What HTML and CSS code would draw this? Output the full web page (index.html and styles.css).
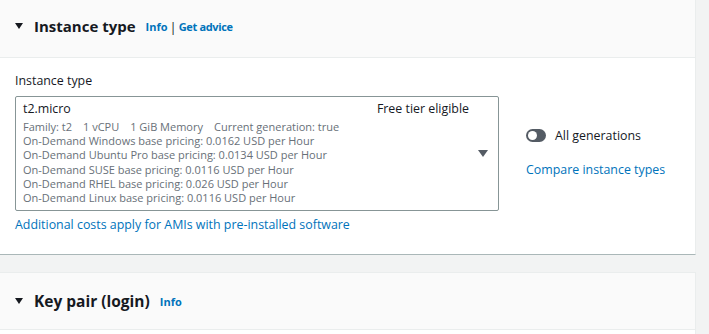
FILE: index.html
```html
<!DOCTYPE html>
<html>
<head>
<meta charset="utf-8">
<link rel="stylesheet" href="styles.css">
</head>
<body>
<div class="page">
  <section class="panel">
    <header class="panel-head first">
      <span class="caret"></span>
      <h2 class="title">Instance type</h2>
      <span class="head-links"><a class="info">Info</a><span class="sep">|</span><a class="info">Get advice</a></span>
    </header>
    <div class="panel-body">
      <div class="field">
        <div class="label">Instance type</div>
        <div class="row">
          <div class="select">
            <div class="opt-top"><span class="opt-name">t2.micro</span><span class="opt-tag">Free tier eligible</span></div>
            <div class="opt-tags"><span>Family: t2</span><span>1 vCPU</span><span>1 GiB Memory</span><span>Current generation: true</span></div>
            <div class="opt-line">On-Demand Windows base pricing: 0.0162 USD per Hour</div>
            <div class="opt-line">On-Demand Ubuntu Pro base pricing: 0.0134 USD per Hour</div>
            <div class="opt-line">On-Demand SUSE base pricing: 0.0116 USD per Hour</div>
            <div class="opt-line">On-Demand RHEL base pricing: 0.026 USD per Hour</div>
            <div class="opt-line">On-Demand Linux base pricing: 0.0116 USD per Hour</div>
            <span class="select-caret"></span>
          </div>
          <div class="side">
            <div class="toggle-row"><span class="toggle"><span class="knob"></span></span><span class="toggle-label">All generations</span></div>
            <a class="link">Compare instance types</a>
          </div>
        </div>
        <a class="link costs">Additional costs apply for AMIs with pre-installed software</a>
      </div>
    </div>
  </section>
  <section class="panel second">
    <header class="panel-head">
      <span class="caret"></span>
      <h2 class="title wide">Key pair (login)</h2>
      <span class="head-links"><a class="info">Info</a></span>
    </header>
    <div class="panel-body"></div>
  </section>
</div>
</body>
</html>
```
FILE: styles.css
```css
html, body {
  margin: 0;
  padding: 0;
  background: #f2f3f3;
  font-family: "Open Sans", "Noto Sans", sans-serif;
  color: #16191f;
  overflow: hidden;
}
.page {
  margin-top: -6px;
  width: 709px;
}
.panel {
  background: #fff;
  margin-left: -1px;
  width: 697px;
  border: 1px solid #eaeded;
  border-bottom-color: #aab7b8;
  box-sizing: border-box;
}
.panel.second {
  margin-top: 17px;
}
.panel-head {
  background: #fafafa;
  border-bottom: 1px solid #eaeded;
  height: 56px;
  display: flex;
  align-items: center;
  padding-left: 15px;
}
.panel-head.first {
  height: 62px;
}
.caret {
  width: 0;
  height: 0;
  border-left: 4px solid transparent;
  border-right: 4px solid transparent;
  border-top: 6px solid #16191f;
  margin-right: 11px;
}
.title {
  margin: 0;
  font-size: 15px;
  font-weight: 700;
  line-height: 20px;
}
.title.wide {
  font-size: 15.5px;
}
.head-links {
  margin-left: 10px;
  font-size: 11px;
  font-weight: 700;
  display: flex;
  align-items: center;
  padding-top: 1px;
}
.info {
  color: #0073bb;
}
.sep {
  margin: 0 2px 0 2px;
  color: #16191f;
  font-weight: 400;
  font-size: 13px;
}
.head-links .info + .sep + .info {
  letter-spacing: -0.35px;
}
.panel-body {
  padding: 14px 0 20px 15px;
}
.label {
  font-size: 12.4px;
  line-height: 18px;
  margin-bottom: 6px;
}
.row {
  display: flex;
  align-items: flex-start;
}
.select {
  position: relative;
  width: 484px;
  height: 115px;
  box-sizing: border-box;
  border: 1px solid #879596;
  border-radius: 2px;
  padding: 3px 7px 0 7px;
}
.opt-top {
  display: flex;
  justify-content: space-between;
  padding-right: 22px;
  font-size: 12.4px;
  line-height: 18px;
  margin-bottom: 2px;
}
.opt-tags, .opt-line {
  font-size: 11px;
  line-height: 14.2px;
  color: #687078;
}
.opt-tags span {
  margin-right: 11px;
}
.select-caret {
  position: absolute;
  right: 10px;
  top: 53px;
  width: 0;
  height: 0;
  border-left: 5px solid transparent;
  border-right: 5px solid transparent;
  border-top: 7px solid #545b64;
}
.side {
  margin-left: 27px;
  padding-top: 31px;
  display: flex;
  flex-direction: column;
}
.toggle-row {
  display: flex;
  align-items: center;
  font-size: 12.4px;
}
.toggle {
  width: 20px;
  height: 13px;
  border-radius: 7px;
  background: #545b64;
  position: relative;
  margin-right: 9px;
}
.knob {
  position: absolute;
  left: 2px;
  top: 2px;
  width: 9px;
  height: 9px;
  border-radius: 50%;
  background: #fff;
}
.link {
  color: #0073bb;
  font-size: 12.4px;
}
.side .link {
  margin-top: 17px;
}
.costs {
  display: block;
  margin-top: 5px;
  line-height: 18px;
}
```
